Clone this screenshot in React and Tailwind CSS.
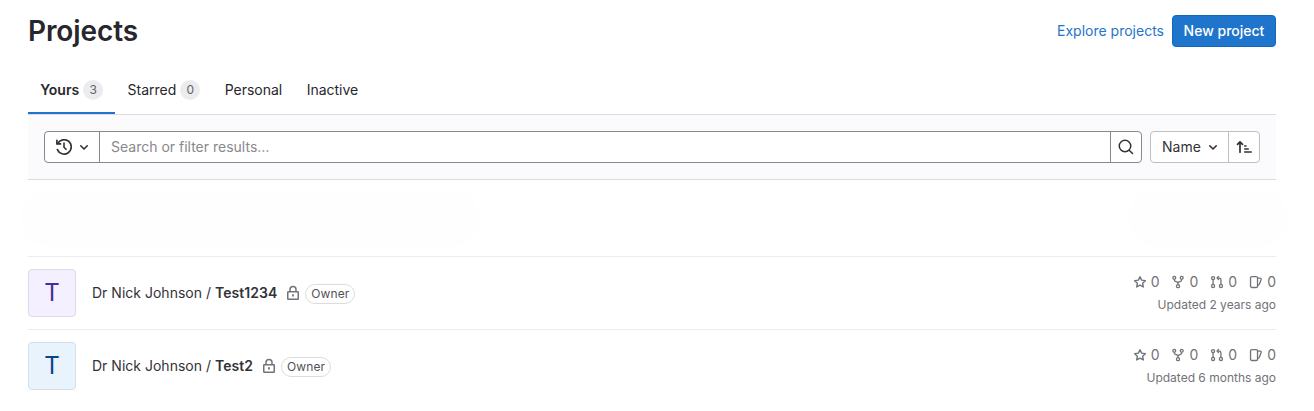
import React from "react";

function Icon({ size = 16, className = "", children }) {
  return (
    <svg
      width={size}
      height={size}
      viewBox="0 0 16 16"
      fill="none"
      stroke="currentColor"
      strokeWidth="1.5"
      className={"shrink-0 " + className}
    >
      {children}
    </svg>
  );
}

const ChevronDown = () => (
  <Icon>
    <path d="M4.750 6.750 8 10l3.250-3.250" strokeWidth="1.600" strokeLinecap="round" strokeLinejoin="round" />
  </Icon>
);

const History = () => (
  <Icon>
    <path d="M.9 1.250v3.650h3.650" strokeWidth="1.700" strokeLinejoin="round" strokeLinecap="round" />
    <path d="M1.700 4.500A7.200 7.200 0 1 1 1.400 10.600" strokeWidth="1.700" strokeLinecap="round" />
    <path d="M8 4v4.200l2 2.100" strokeWidth="1.600" strokeLinecap="round" strokeLinejoin="round" />
  </Icon>
);

const Search = () => (
  <Icon>
    <circle cx="7" cy="7" r="5.750" />
    <path d="m11.200 11.200 3.300 3.300" strokeLinecap="round" />
  </Icon>
);

const SortLowest = () => (
  <Icon>
    <path d="M4 13.250V3M1.500 5.400 4 2.800l2.500 2.600" strokeWidth="1.700" strokeLinecap="round" strokeLinejoin="round" />
    <path d="M8.750 7h1.250M8.750 10h3.500M8.750 13h6.500" strokeWidth="1.600" strokeLinecap="round" />
  </Icon>
);

const Lock = () => (
  <Icon className="text-[#737278]">
    <rect x="2.750" y="6.750" width="10.500" height="7.500" rx=".5" />
    <path d="M5 6.500V4.500a3 3 0 0 1 6 0v2" />
    <path d="M8 9.250v2.250" strokeWidth="1.800" />
  </Icon>
);

const Star = () => (
  <Icon size={14}>
    <path d="m8 2 1.850 3.900 4.250.55-3.100 3 .8 4.200L8 11.600l-3.800 2.050.8-4.200-3.100-3 4.250-.55Z" strokeWidth="1.600" strokeLinejoin="round" />
  </Icon>
);

const Fork = () => (
  <Icon size={14}>
    <circle cx="3.750" cy="3.250" r="1.650" />
    <circle cx="12.250" cy="3.250" r="1.650" />
    <circle cx="8" cy="12.750" r="1.750" />
    <path d="M3.750 5c0 1.500.75 2.200 2 2.700L8 8.500l2.250-.8c1.250-.5 2-1.200 2-2.700M8 8.500V11" />
  </Icon>
);

const MergeRequest = () => (
  <Icon size={14}>
    <circle cx="3.500" cy="3.500" r="1.750" />
    <circle cx="3.500" cy="12.500" r="1.750" />
    <circle cx="12.500" cy="12.500" r="1.750" />
    <path d="M3.500 5.250v5.500M12.500 10.750V5.500a2 2 0 0 0-2-2H8.250" />
    <path d="M9.800 1.750 8.050 3.500 9.800 5.250" strokeLinecap="round" strokeLinejoin="round" />
  </Icon>
);

const Issues = () => (
  <Icon size={14}>
    <rect x="1.750" y="1.750" width="8" height="12.500" rx="1.500" />
    <path d="M9.750 3.500h2.900c1 0 1.500.65 1.200 1.600L12.300 9.500c-.4 1.200-1.100 2-2.300 2.750" strokeLinejoin="round" />
  </Icon>
);

const tabs = [
  { label: "Yours", count: 3, active: true },
  { label: "Starred", count: 0 },
  { label: "Personal" },
  { label: "Inactive" },
];

function Tab({ label, count, active }) {
  return (
    <div
      className={
        "flex h-12 items-center gap-1 border-b-2 px-[12.200px] pt-0.5 text-[#28272d] " +
        (active ? "border-[#1f75cb] font-semibold" : "border-transparent")
      }
    >
      <span>{label}</span>
      {count !== undefined && (
        <span className="flex h-5 w-5 items-center justify-center rounded-full bg-[#ececef] text-xs font-normal text-[#626168]">
          {count}
        </span>
      )}
    </div>
  );
}

function Project({ name, avatar, updated }) {
  return (
    <div className="flex h-[73px] items-start justify-between border-t border-[#ececef] pt-3">
      <div className="flex items-center">
        <div className={"flex h-12 w-12 items-center justify-center rounded border text-2xl " + avatar}>T</div>
        <div className="ml-4 flex items-center text-[#333238]">
          <span className="tracking-[0.01px]">
            Dr Nick Johnson / <span className="font-semibold tracking-[0.05px]">{name}</span>
          </span>
          <span className="ml-2">
            <Lock />
          </span>
          <span className="mt-0.5 ml-1 flex h-5 items-center rounded-full border border-[#dcdcde] px-[5px] text-xs tracking-[0.1px] text-[#535158]">
            Owner
          </span>
        </div>
      </div>
      <div className="flex flex-col items-end pt-[3px] text-[#737278]">
        <div className="flex gap-3">
          {[Star, Fork, MergeRequest, Issues].map((Glyph, i) => (
            <div key={i} className="flex items-center gap-1">
              <Glyph />
              <span>0</span>
            </div>
          ))}
        </div>
        <div className="mt-[3px] text-xs leading-5">{updated}</div>
      </div>
    </div>
  );
}

export default function App() {
  return (
    <div className="h-[411px] overflow-hidden bg-white pr-[38px] pl-7 font-['Inter',sans-serif] text-sm leading-5">
      <header className="flex h-[66px] items-start justify-between pt-[15px]">
        <h1 className="text-[28px] leading-8 font-semibold tracking-[-0.1px] text-[#28272d]">Projects</h1>
        <div className="flex items-center gap-2">
          <a className="text-[#1f75cb]">Explore projects</a>
          <button className="h-8 w-[104px] rounded border border-[#1068bf] bg-[#1f75cb] font-medium whitespace-nowrap text-white">
            New project
          </button>
        </div>
      </header>

      <nav className="flex h-12">
        {tabs.map((t) => (
          <Tab key={t.label} {...t} />
        ))}
      </nav>

      <div className="flex h-[66px] items-center gap-2 border-y border-[#dcdcde] bg-[#fbfafd] px-4">
        <div className="flex h-8 grow rounded border border-[#89888d] bg-white text-[#333238]">
          <div className="flex w-[55px] items-center gap-1 border-r border-[#89888d] pl-[11px]">
            <History />
            <ChevronDown />
          </div>
          <div className="flex grow items-center pl-[11px] text-[#89888d]">Search or filter results…</div>
          <div className="flex w-[31px] items-center justify-center border-l border-[#89888d]">
            <Search />
          </div>
        </div>
        <div className="flex h-8 w-[110px] rounded border border-[#bfbfc3] bg-white text-[#333238]">
          <div className="flex grow items-center gap-1 pl-[11px]">
            Name
            <ChevronDown />
          </div>
          <div className="flex w-[31px] items-center justify-center border-l border-[#bfbfc3]">
            <SortLowest />
          </div>
        </div>
      </div>

      <div className="flex h-[76px] items-center justify-between">
        <div className="-ml-2 h-14 w-[460px] rounded-full bg-[#fefefe]" />
        <div className="-mr-3 h-14 w-[160px] rounded-full bg-[#fefefe]" />
      </div>

      <Project
        name="Test1234"
        avatar="border-[#dedae9] bg-[#f4f0ff] text-[#41319c]"
        updated="Updated 2 years ago"
      />
      <Project
        name="Test2"
        avatar="border-[#d2dfec] bg-[#e9f3fc] text-[#064787]"
        updated="Updated 6 months ago"
      />
    </div>
  );
}
